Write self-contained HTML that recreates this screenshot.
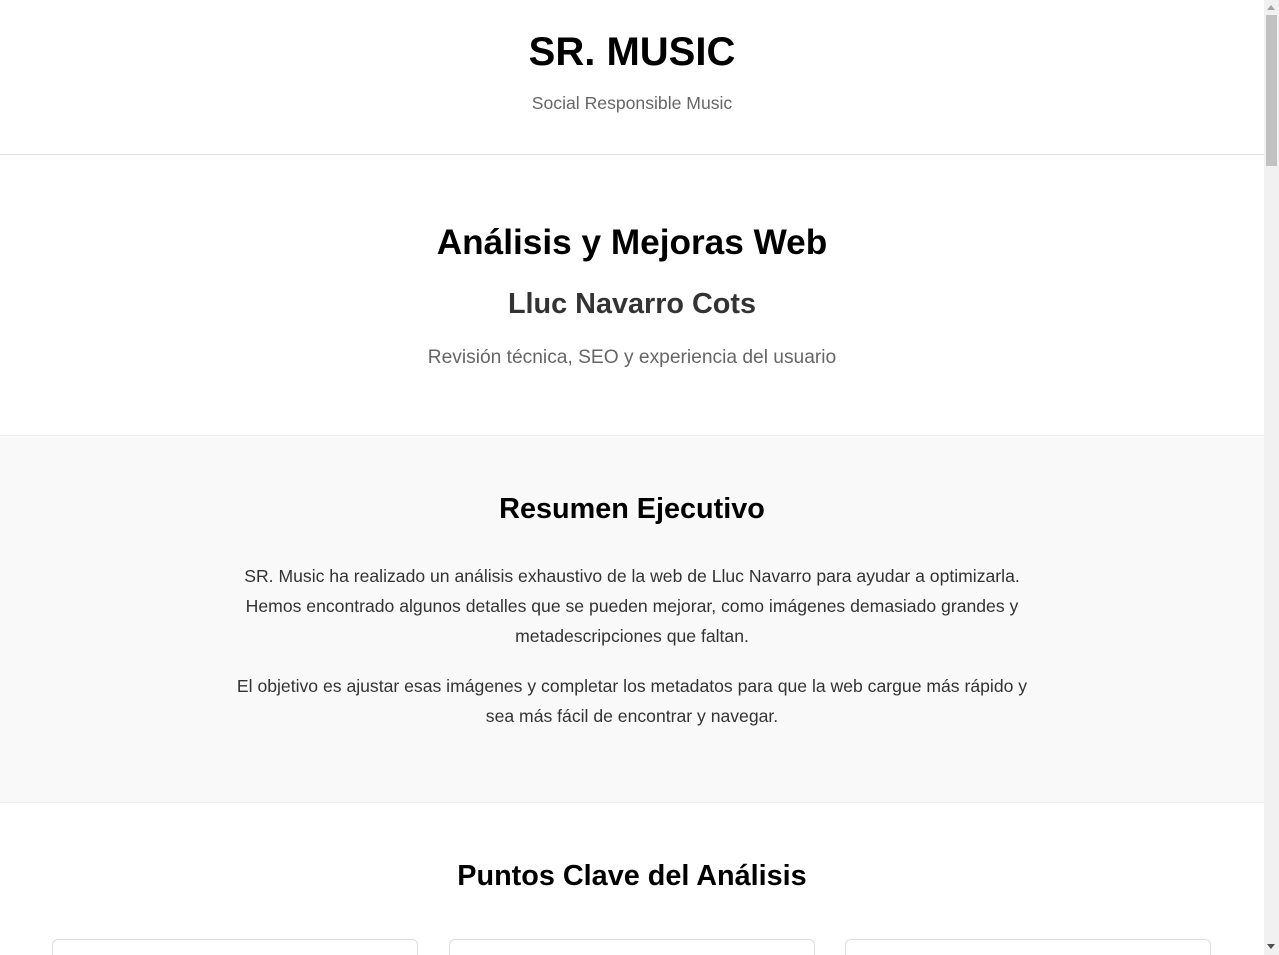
<!DOCTYPE html>
<html><head><meta charset="utf-8"><style>
*{margin:0;padding:0;box-sizing:border-box}
html,body{width:1279px;height:955px;overflow:hidden;background:#fff;font-family:"Liberation Sans",Arial,sans-serif}
.page{position:absolute;left:0;top:0;width:1264px;height:955px;overflow:hidden}
.c{position:absolute;left:0;width:1264px;text-align:center;white-space:nowrap}
.sb{position:absolute;left:1264px;top:0;width:15px;height:955px;background:#f1f1f1}
.thumb{position:absolute;left:2px;top:15px;width:11px;height:151px;background:#c1c1c1}
.card{position:absolute;top:939px;width:366px;height:40px;border:1px solid #ddd;border-radius:6px;background:#fff}
p.t{font-size:17.6px;color:#333;line-height:30px}
</style></head><body><div class="page">
<div class="c" style="top:28px;font-size:40px;font-weight:bold;color:#000;line-height:48px">SR. MUSIC</div>
<div class="c" style="top:92px;font-size:17.6px;color:#666;line-height:22px">Social Responsible Music</div>
<div style="position:absolute;left:0;top:154px;width:1264px;height:1px;background:#e0e0e0"></div>
<div class="c" style="top:222px;font-size:35.2px;font-weight:bold;color:#000;line-height:42px">Análisis y Mejoras Web</div>
<div class="c" style="top:287px;font-size:28.8px;font-weight:bold;color:#333;line-height:34px">Lluc Navarro Cots</div>
<div class="c" style="top:346px;font-size:19.2px;color:#666;line-height:24px">Revisión técnica, SEO y experiencia del usuario</div>
<div style="position:absolute;left:0;top:435px;width:1264px;height:368px;background:#f9f9f9;border-top:1px solid #eee;border-bottom:1px solid #eee"></div>
<div class="c" style="top:492px;font-size:28.8px;font-weight:bold;color:#000;line-height:34px">Resumen Ejecutivo</div>
<div class="c" style="top:561px"><p class="t">SR. Music ha realizado un análisis exhaustivo de la web de Lluc Navarro para ayudar a optimizarla.<br>Hemos encontrado algunos detalles que se pueden mejorar, como imágenes demasiado grandes y<br>metadescripciones que faltan.</p></div>
<div class="c" style="top:671px"><p class="t">El objetivo es ajustar esas imágenes y completar los metadatos para que la web cargue más rápido y<br>sea más fácil de encontrar y navegar.</p></div>
<div class="c" style="top:859px;font-size:28.8px;font-weight:bold;color:#000;line-height:34px">Puntos Clave del Análisis</div>
<div class="card" style="left:52px"></div>
<div class="card" style="left:449px"></div>
<div class="card" style="left:845px"></div>
</div>
<div class="sb"><div class="thumb"></div>
<div style="position:absolute;left:3px;top:5px;width:0;height:0;border-left:4.5px solid transparent;border-right:4.5px solid transparent;border-bottom:5px solid #a3a3a3"></div>
<div style="position:absolute;left:3px;top:944px;width:0;height:0;border-left:4.5px solid transparent;border-right:4.5px solid transparent;border-top:5px solid #505050"></div>
</div>
</body></html>
